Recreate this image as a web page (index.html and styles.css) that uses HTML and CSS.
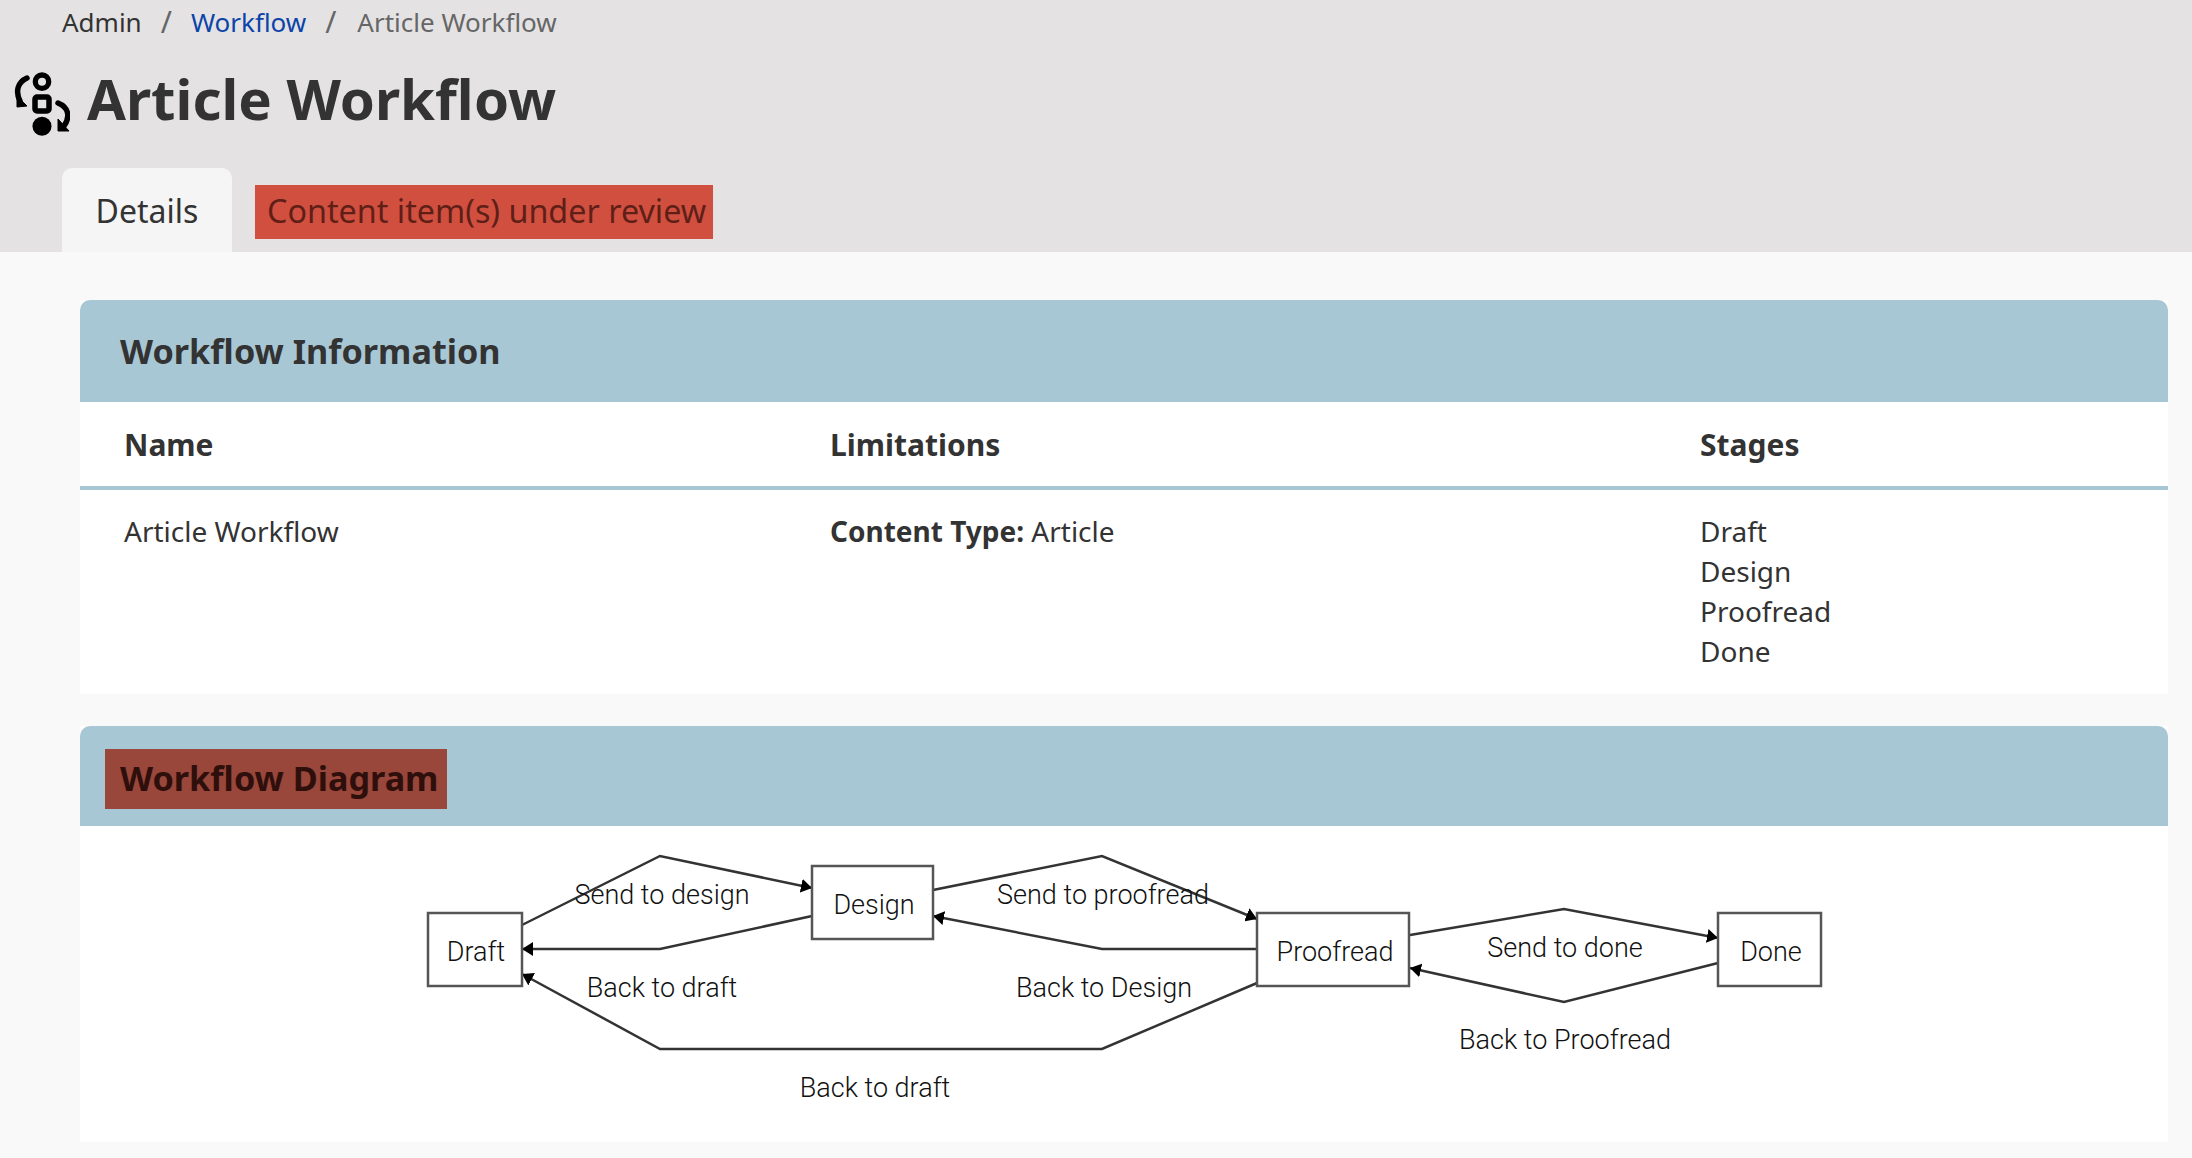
FILE: index.html
```html
<!DOCTYPE html>
<html lang="en">

<head>
    <meta charset="UTF-8">
    <title>Article Workflow</title>
    <link rel="stylesheet" href="styles.css">
</head>

<body>
    <header class="top">
        <nav class="crumbs">
            <span>Admin</span>
            <span class="sep">/</span>
            <a href="#">Workflow</a>
            <span class="sep">/</span>
            <span class="current">Article Workflow</span>
        </nav>
        <div class="title">
            <svg class="title-icon" width="56" height="64" viewBox="0 0 56 64">
                <circle cx="28" cy="9.7" r="6.7" fill="none" stroke="#000" stroke-width="5.3" />
                <rect x="21" y="25" width="14" height="14" rx="2" fill="none" stroke="#000" stroke-width="5.5" />
                <circle cx="28" cy="54.3" r="9.5" fill="#000" />
                <path d="M13 6 C4 10 1 19 6 29" fill="none" stroke="#000" stroke-width="5.5" stroke-linecap="round" />
                <path d="M3 24 L3 35 L13 34 Z" fill="#000" stroke="#000" stroke-linejoin="round" />
                <path d="M44 31 C54 35 57 44 50 54" fill="none" stroke="#000" stroke-width="5.5" stroke-linecap="round" />
                <path d="M44 47 L44 59 L55 59 Z" fill="#000" stroke="#000" stroke-linejoin="round" />
            </svg>
            <h1>Article Workflow</h1>
        </div>
        <div class="tabs">
            <a class="tab" href="#">Details</a>
            <span class="tab-alert">Content item(s) under review</span>
        </div>
    </header>

    <main class="content">
        <section class="panel">
            <h2 class="panel-head">Workflow Information</h2>
            <table class="info">
                <thead>
                    <tr>
                        <th class="col-name">Name</th>
                        <th class="col-limits">Limitations</th>
                        <th>Stages</th>
                    </tr>
                </thead>
                <tbody>
                    <tr>
                        <td>Article Workflow</td>
                        <td><strong>Content Type:</strong> Article</td>
                        <td>Draft<br>Design<br>Proofread<br>Done</td>
                    </tr>
                </tbody>
            </table>
        </section>

        <section class="panel">
            <h2 class="panel-head"><span class="head-alert">Workflow Diagram</span></h2>
            <div class="diagram">
                <!-- offset 80,826 so the numbers below are page x/y minus that -->
                <svg width="2088" height="316" viewBox="80 826 2088 316">
                    <defs>
                        <marker id="arrow" markerUnits="userSpaceOnUse" markerWidth="12" markerHeight="14" refX="11" refY="7" orient="auto">
                            <path d="M0 0 L11 7 L0 14 Z" fill="#000" />
                        </marker>
                    </defs>
                    <g class="edges">
                        <polyline points="522,925 660,856 812,888" marker-end="url(#arrow)" />
                        <polyline points="812,916 660,949 522,949" marker-end="url(#arrow)" />
                        <polyline points="1257,983 1102,1049 660,1049 522,974" marker-end="url(#arrow)" />
                        <polyline points="933,890 1102,856 1257,919" marker-end="url(#arrow)" />
                        <polyline points="1257,949 1102,949 933,916" marker-end="url(#arrow)" />
                        <polyline points="1410,935 1564,909 1718,938" marker-end="url(#arrow)" />
                        <polyline points="1718,963 1564,1002 1410,968" marker-end="url(#arrow)" />
                    </g>
                    <g class="nodes">
                        <rect x="428" y="913" width="94" height="73" />
                        <rect x="812" y="866" width="121" height="73" />
                        <rect x="1257" y="913" width="152" height="73" />
                        <rect x="1718" y="913" width="103" height="73" />
                    </g>
                    <g class="labels">
                        <text x="476" y="961">Draft</text>
                        <text x="874" y="914">Design</text>
                        <text x="1335" y="961">Proofread</text>
                        <text x="1771" y="961">Done</text>
                        <text x="662" y="904">Send to design</text>
                        <text x="662" y="997">Back to draft</text>
                        <text x="875" y="1097">Back to draft</text>
                        <text x="1103" y="904">Send to proofread</text>
                        <text x="1104" y="997">Back to Design</text>
                        <text x="1565" y="957">Send to done</text>
                        <text x="1565" y="1049">Back to Proofread</text>
                    </g>
                </svg>
            </div>
        </section>
    </main>
</body>

</html>
```

FILE: styles.css
```css
* {
    box-sizing: border-box;
    margin: 0;
    padding: 0;
}

body {
    font-family: "Noto Sans", "Open Sans", sans-serif;
    font-size: 28px;
    line-height: 40px;
    color: #333;
    background-color: #f9f9f9;
}

.top {
    height: 252px;
    background-color: #e4e2e3;
}

.crumbs {
    display: flex;
    gap: 19px;
    height: 44px;
    padding-left: 62px;
    font-size: 26px;
    line-height: 44px;
    color: #333;
}

.crumbs a {
    color: #0b44a8;
    text-decoration: none;
}

.crumbs .sep,
.crumbs .current {
    color: #666;
}

.crumbs .sep {
    font-size: 30px;
}

.crumbs .current {
    margin-left: 2px;
}

.title {
    display: flex;
    align-items: center;
    gap: 17px;
    height: 76px;
    margin-top: 22px;
    padding-left: 14px;
}

.title-icon {
    flex: none;
}

h1 {
    margin-bottom: 12px;
    font-size: 56.3px;
    line-height: 76px;
    font-weight: 700;
}

.tabs {
    display: flex;
    align-items: flex-start;
    gap: 23px;
    margin-top: 26px;
    padding-left: 62px;
}

.tab {
    width: 170px;
    height: 84px;
    font-size: 32px;
    line-height: 86px;
    text-align: center;
    color: #333;
    text-decoration: none;
    background-color: #f5f5f5;
    border-radius: 10px 10px 0 0;
}

.tab-alert {
    width: 458px;
    height: 54px;
    margin-top: 17px;
    padding-left: 12px;
    font-size: 32.3px;
    line-height: 50px;
    white-space: nowrap;
    color: #5f1f17;
    background-color: #d14f3f;
}

.content {
    padding: 48px 24px 0 80px;
}

.panel {
    margin-bottom: 32px;
    background-color: #fff;
}

.panel-head {
    display: flex;
    align-items: center;
    height: 102px;
    padding-left: 40px;
    font-size: 34.2px;
    font-weight: 700;
    color: #333;
    background-color: #a8c7d4;
    border-radius: 10px 10px 0 0;
}

.panel:last-child .panel-head {
    height: 100px;
    padding: 6px 0 0 25px;
}

.head-alert {
    width: 342px;
    height: 60px;
    padding-left: 15px;
    line-height: 57px;
    white-space: nowrap;
    color: #2e0f0b;
    background-color: #99463b;
}

.info {
    width: 100%;
    border-collapse: collapse;
}

.info th {
    height: 86px;
    padding: 2px 0 0 44px;
    font-size: 30px;
    text-align: left;
    font-weight: 700;
    border-bottom: 4px solid #a8c7d4;
}

.info td {
    padding: 21px 0 23px 44px;
    vertical-align: top;
}

.col-name {
    width: 706px;
}

.col-limits {
    width: 870px;
}

.diagram svg {
    display: block;
}

.edges polyline {
    fill: none;
    stroke: #333;
    stroke-width: 2.5;
}

.nodes rect {
    fill: #fff;
    stroke: #555;
    stroke-width: 2.5;
}

.labels text {
    font-family: Roboto, "Liberation Sans", sans-serif;
    font-size: 27px;
    font-weight: 300;
    fill: #111;
    text-anchor: middle;
}
```
